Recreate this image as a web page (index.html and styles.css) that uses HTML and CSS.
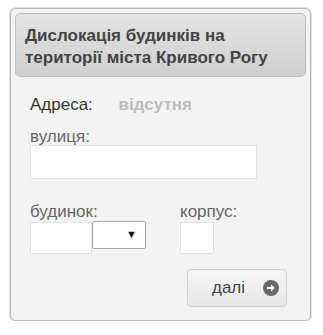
FILE: index.html
```html
<!DOCTYPE html>
<html lang="uk">
<head>
    <meta charset="UTF-8">
    <title>Дислокація будинків</title>
    <link rel="stylesheet" href="styles.css">
</head>
<body>
    <div class="panel">
        <div class="panel-head">Дислокація будинків на<br>території міста Кривого Рогу</div>
        <form class="panel-body">
            <p class="address">
                <span class="address-label">Адреса:</span>
                <span class="address-value">відсутня</span>
            </p>
            <label class="field-label">вулиця:</label>
            <input class="street" type="text">

            <div class="house-row">
                <div class="house-col">
                    <label class="field-label">будинок:</label>
                    <div class="house-inputs">
                        <input class="house" type="text">
                        <div class="select">▼</div>
                    </div>
                </div>
                <div class="block-col">
                    <label class="field-label">корпус:</label>
                    <input class="block" type="text">
                </div>
            </div>

            <div class="actions">
                <button type="button" class="next">
                    далі
                    <svg width="16" height="16" viewBox="0 0 16 16">
                        <circle cx="8" cy="8" r="8" fill="#6a6a6a"/>
                        <path d="M4 7h4V4.5L11.8 8 8 11.5V9H4z" fill="#fff"/>
                    </svg>
                </button>
            </div>
        </form>
    </div>
</body>
</html>
```

FILE: styles.css
```css
body {
    margin: 0;
    font-family: "Liberation Sans", Arial, sans-serif;
    background: #fff;
}
.panel {
    box-sizing: border-box;
    width: 301px;
    height: 313px;
    margin: 8px 0 0 10px;
    padding: 4px;
    border: 1px solid #b9b9b9;
    border-radius: 6px;
    box-shadow: 0 0 0 1px #e2e2e2;
    background: #f3f3f3;
}
.panel-head {
    box-sizing: border-box;
    height: 64px;
    padding: 11px 9px 0 9px;
    border: 1px solid #bdbdbd;
    border-radius: 5px;
    background: linear-gradient(#e4e4e4, #cfcfcf);
    color: #444;
    font-size: 17px;
    font-weight: bold;
    line-height: 22px;
}
.panel-body {
    padding: 0 0 0 15px;
}
.address {
    margin: 18px 0 0 0;
    font-size: 17px;
    line-height: 19px;
    color: #333;
}
.address-value {
    margin-left: 21px;
    color: #bdbdbd;
    font-weight: bold;
}
.field-label {
    display: block;
    font-size: 17px;
    color: #666;
    line-height: 16px;
}
.panel-body > .field-label {
    margin-top: 15px;
}
input {
    display: block;
    padding: 0;
    box-sizing: border-box;
    border: 1px solid #e2e2e2;
    background: #fff;
}
.street {
    width: 227px;
    height: 34px;
}
.house-row {
    display: flex;
    margin-top: 25px;
}
.house-col {
    width: 150px;
}
.house-inputs {
    display: flex;
    align-items: flex-start;
}
.house {
    width: 62px;
    height: 32px;
    margin-top: 2px;
}
.select {
    box-sizing: border-box;
    width: 54px;
    height: 28px;
    margin-top: 1px;
    padding: 6px 8px 0 0;
    border: 1px solid #a8a8a8;
    border-radius: 2px;
    background: #fff;
    color: #111;
    font-size: 11px;
    text-align: right;
}
.block {
    width: 34px;
    height: 32px;
    margin-top: 2px;
}
.actions {
    display: flex;
    justify-content: flex-end;
    margin-top: 15px;
    padding-right: 19px;
}
.next {
    display: flex;
    align-items: center;
    justify-content: space-between;
    box-sizing: border-box;
    width: 100px;
    height: 38px;
    padding: 0 7px 0 24px;
    border: 1px solid #d2d2d2;
    border-radius: 4px;
    background: linear-gradient(#f6f6f6, #e7e7e7);
    color: #444;
    font-family: "Liberation Sans", Arial, sans-serif;
    font-size: 17px;
}
```
